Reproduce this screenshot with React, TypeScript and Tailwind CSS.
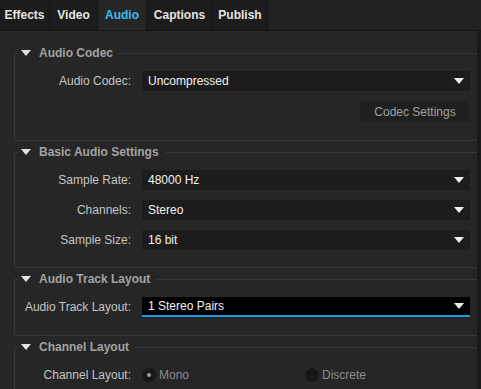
import React from "react";

const tabs = [
  { name: "Effects", w: "w-[50px]" },
  { name: "Video", w: "w-[48px]" },
  { name: "Audio", w: "w-[49px]" },
  { name: "Captions", w: "w-[66px]" },
  { name: "Publish", w: "w-[55px]" },
];

const Caret = ({ className = "" }: { className?: string }) => (
  <svg width="10" height="6" viewBox="0 0 10 6" className={className}>
    <path d="M0 0 H10 L5 6 Z" fill="currentColor" />
  </svg>
);

const Section = ({ title, children, pb = "pb-[18px]" }: { title: string; children: React.ReactNode; pb?: string }) => (
  <fieldset className={`border-l border-t border-b border-[#363636] ${pb}`}>
    <legend className="ml-[4px] pl-[2px] pr-[6px] h-[14px] flex items-center">
      <Caret className="text-[#e2e2e2] mr-[8px]" />
      <span className="text-[12px] font-bold text-[#a2a2a2] leading-[14px]">{title}</span>
    </legend>
    <div className="mt-[11px] flex flex-col gap-[10px]">{children}</div>
  </fieldset>
);

const Row = ({ label, children }: { label: string; children: React.ReactNode }) => (
  <div className="flex items-center">
    <div className="w-[116px] text-right text-[12px] text-[#c4c4c4]">{label}</div>
    <div className="ml-[11px] flex-1 mr-[7px]">{children}</div>
  </div>
);

const Select = ({ value, focused = false }: { value: string; focused?: boolean }) => (
  <div
    className={`h-[20px] flex items-center justify-between pl-[6px] pr-[6px] text-[12px] text-[#f2f2f2] ${
      focused ? "bg-black border-b-2 border-[#1d9ae2]" : "bg-[#1c1c1c]"
    }`}
  >
    <span>{value}</span>
    <Caret className="text-[#eeeeee]" />
  </div>
);

const Radio = ({ label, checked }: { label: string; checked?: boolean }) => (
  <div className="flex items-center gap-[3px]">
    <div className="w-[14px] h-[14px] rounded-full bg-[#171717] flex items-center justify-center">
      {checked && <div className="w-[4px] h-[4px] rounded-full bg-[#9a9a9a]" />}
    </div>
    <span className="text-[12px] text-[#8c8c8c]">{label}</span>
  </div>
);

export default function App() {
  return (
    <div className="w-[481px] h-[389px] overflow-hidden bg-[#262626] flex flex-col font-['Liberation_Sans',Arial,sans-serif]">
      <div className="h-[31px] flex bg-[#222222] border-b border-[#161616] shrink-0">
        {tabs.map((t) => (
          <div
            key={t.name}
            className={`${t.w} h-full flex items-center justify-center text-[12px] font-bold border-r border-[#141414] ${
              t.name === "Audio" ? "bg-[#262626] text-[#3cbdf0]" : "bg-[#1c1c1c] text-[#e4e4e4]"
            }`}
          >
            {t.name}
          </div>
        ))}
      </div>
      <div className="flex flex-1 min-h-0">
        <div className="flex-1 pl-[14px] pt-[15px] flex flex-col gap-[4px]">
          <Section title="Audio Codec" pb="pb-[18px]">
            <Row label="Audio Codec:">
              <Select value="Uncompressed" />
            </Row>
            <div className="flex justify-end mr-[7px]">
              <div className="w-[110px] h-[21px] bg-[#1f1f1f] text-[12px] text-[#a0a0a0] flex items-center justify-center">
                Codec Settings
              </div>
            </div>
          </Section>
          <Section title="Basic Audio Settings" pb="pb-[17px]">
            <Row label="Sample Rate:">
              <Select value="48000 Hz" />
            </Row>
            <Row label="Channels:">
              <Select value="Stereo" />
            </Row>
            <Row label="Sample Size:">
              <Select value="16 bit" />
            </Row>
          </Section>
          <Section title="Audio Track Layout" pb="pb-[18px]">
            <Row label="Audio Track Layout:">
              <Select value="1 Stereo Pairs" focused />
            </Row>
          </Section>
          <Section title="Channel Layout" pb="pb-[18px]">
            <Row label="Channel Layout:">
              <div className="flex h-[20px] items-center">
                <div className="w-[163px]">
                  <Radio label="Mono" checked />
                </div>
                <Radio label="Discrete" />
              </div>
            </Row>
          </Section>
        </div>
        <div className="w-[4px] bg-[#1a1a1a]" />
      </div>
    </div>
  );
}
